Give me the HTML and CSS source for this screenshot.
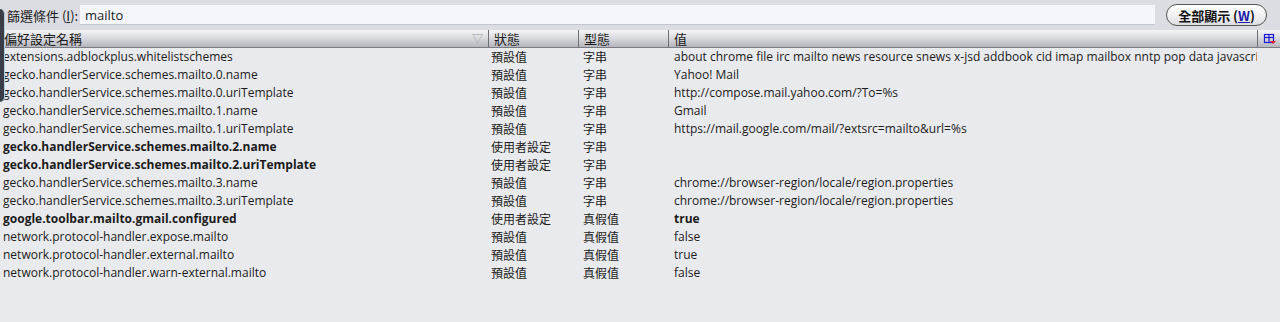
FILE: index.html
```html
<!DOCTYPE html>
<html lang="zh-Hant">
<head>
    <meta charset="UTF-8">
    <title>about:config</title>
    <link rel="stylesheet" href="styles.css">
</head>
<body>
    <div class="window-edge"></div>

    <!-- Filter bar -->
    <div class="filter-bar">
        <label class="filter-label" for="filter">篩選條件 (<u>I</u>):</label>
        <input id="filter" class="filter-input" type="text" value="mailto">
        <button class="show-all">全部顯示 (<u>W</u>)</button>
    </div>

    <!-- Preference tree -->
    <div class="tree">
        <div class="tree-head">
            <div class="col col-name">偏好設定名稱<span class="sort">▽</span></div>
            <div class="col">狀態</div>
            <div class="col">型態</div>
            <div class="col">值</div>
            <div class="col col-picker">
                <svg width="13" height="12" viewBox="0 0 13 12">
                    <rect x="1.5" y="1.5" width="9" height="8" fill="none" stroke="#1c1cd8" stroke-width="1.2"/>
                    <line x1="1.5" y1="4.5" x2="10.5" y2="4.5" stroke="#1c1cd8" stroke-width="1.2"/>
                    <line x1="6" y1="1.5" x2="6" y2="9.5" stroke="#1c1cd8" stroke-width="1.2"/>
                    <path d="M7 8 L13 8 L10 11 Z" fill="#e0202a"/>
                </svg>
            </div>
        </div>

        <div class="row"><span>extensions.adblockplus.whitelistschemes</span><span>預設值</span><span>字串</span><span class="val">about chrome file irc mailto news resource snews x-jsd addbook cid imap mailbox nntp pop data javascript moz-icon</span></div>
        <div class="row"><span>gecko.handlerService.schemes.mailto.0.name</span><span>預設值</span><span>字串</span><span class="val">Yahoo! Mail</span></div>
        <div class="row"><span>gecko.handlerService.schemes.mailto.0.uriTemplate</span><span>預設值</span><span>字串</span><span class="val">http://compose.mail.yahoo.com/?To=%s</span></div>
        <div class="row"><span>gecko.handlerService.schemes.mailto.1.name</span><span>預設值</span><span>字串</span><span class="val">Gmail</span></div>
        <div class="row"><span>gecko.handlerService.schemes.mailto.1.uriTemplate</span><span>預設值</span><span>字串</span><span class="val">https://mail.google.com/mail/?extsrc=mailto&amp;url=%s</span></div>
        <div class="row user"><span>gecko.handlerService.schemes.mailto.2.name</span><span>使用者設定</span><span>字串</span><span class="val"></span></div>
        <div class="row user"><span>gecko.handlerService.schemes.mailto.2.uriTemplate</span><span>使用者設定</span><span>字串</span><span class="val"></span></div>
        <div class="row"><span>gecko.handlerService.schemes.mailto.3.name</span><span>預設值</span><span>字串</span><span class="val">chrome://browser-region/locale/region.properties</span></div>
        <div class="row"><span>gecko.handlerService.schemes.mailto.3.uriTemplate</span><span>預設值</span><span>字串</span><span class="val">chrome://browser-region/locale/region.properties</span></div>
        <div class="row user"><span>google.toolbar.mailto.gmail.configured</span><span>使用者設定</span><span>真假值</span><span class="val">true</span></div>
        <div class="row"><span>network.protocol-handler.expose.mailto</span><span>預設值</span><span>真假值</span><span class="val">false</span></div>
        <div class="row"><span>network.protocol-handler.external.mailto</span><span>預設值</span><span>真假值</span><span class="val">true</span></div>
        <div class="row"><span>network.protocol-handler.warn-external.mailto</span><span>預設值</span><span>真假值</span><span class="val">false</span></div>
    </div>
</body>
</html>
```

FILE: styles.css
```css
/* Page */
body {
    margin: 0;
    background: #e9eaed;
    color: #1b1b1b;
    font-family: 'Open Sans', 'Noto Sans CJK TC', sans-serif;
    font-size: 12px;
    overflow: hidden;
}

/* Dark window edge peeking in at the left */
.window-edge {
    position: absolute;
    left: 0;
    top: 9px;
    width: 4px;
    height: 93px;
    background: #3a3d46;
    border-right: 1px solid #a8cde2;
    border-radius: 0 6px 6px 0;
}

/* Filter bar */
.filter-bar {
    display: flex;
    align-items: center;
    height: 30px;
    padding: 0 13px 0 7px;
    background: #dcdde3;
}

.filter-label {
    width: 73px;
    font-family: 'Noto Sans CJK TC', sans-serif;
    font-size: 13px;
}

.filter-input {
    flex: 1;
    height: 19px;
    margin: 0 11px 0 0;
    padding: 0 5px;
    border: none;
    border-bottom: 1px solid #c3c5cf;
    background: #f5f6fb;
    font-family: 'Open Sans', sans-serif;
    font-size: 13px;
    color: #1b1b1b;
}

.show-all {
    width: 101px;
    height: 22px;
    padding: 0;
    border: 1px solid #555;
    border-radius: 11px;
    background: linear-gradient(#ffffff, #f2f2f4 50%, #dcdde2);
    font-family: 'Noto Sans CJK TC', sans-serif;
    font-weight: bold;
    font-size: 13px;
    color: #111;
}

.show-all u {
    color: #1a1aa8;
}

/* Tree header */
.tree-head {
    display: grid;
    grid-template-columns: 489px 90px 90px 1fr 22px;
    height: 17px;
    background: linear-gradient(#f5f5f7, #dedfe3 40%, #b6b7be);
    border-bottom: 1px solid #7b7c83;
    font-family: 'Noto Sans CJK TC', sans-serif;
    font-size: 13px;
    line-height: 17px;
}

.col {
    position: relative;
    padding-left: 5px;
    border-right: 1px solid #6d6e75;
}

.col-name {
    padding-left: 4px;
}

.sort {
    position: absolute;
    right: 5px;
    top: 0;
    color: #9a9ba3;
    font-size: 11px;
}

.col-picker {
    display: flex;
    align-items: center;
    justify-content: center;
    padding: 0;
    border-right: none;
}

/* Rows */
.row {
    display: grid;
    grid-template-columns: 488px 92px 90px 587px;
    height: 18px;
    line-height: 18px;
}

.row span {
    padding-left: 3px;
    white-space: nowrap;
    overflow: hidden;
    text-overflow: clip;
}

.row span:nth-child(2),
.row span:nth-child(3) {
    font-family: 'Noto Sans CJK TC', sans-serif;
}

.row .val {
    padding-left: 4px;
}

.row.user span:nth-child(1),
.row.user span:nth-child(4) {
    font-weight: bold;
}
```
